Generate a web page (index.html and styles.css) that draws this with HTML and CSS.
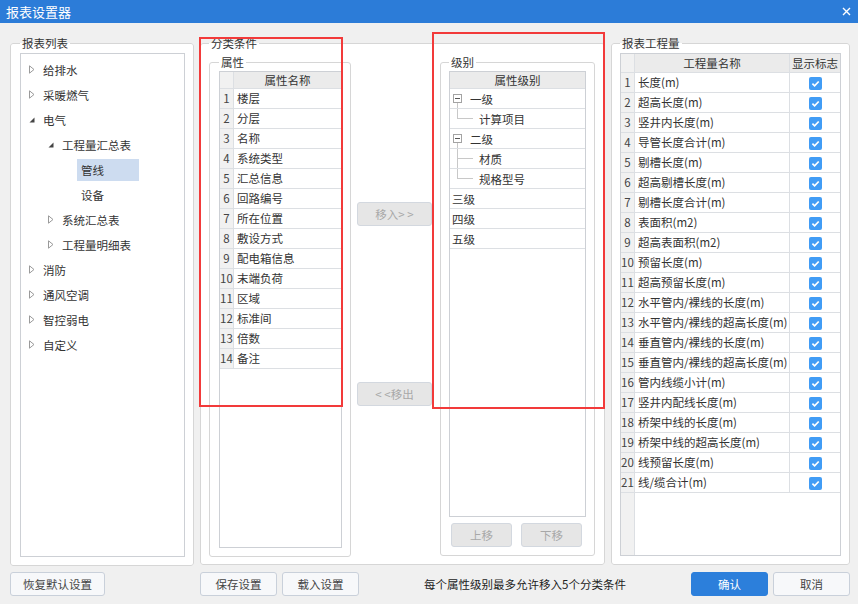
FILE: index.html
```html
<!DOCTYPE html>
<html lang="zh-CN">
<head>
    <meta charset="UTF-8">
    <title>报表设置器</title>
    <link rel="stylesheet" href="styles.css">
</head>
<body>

    <div class="titlebar">
        <span>报表设置器</span>
        <svg class="close" width="9" height="9" viewBox="0 0 9 9"><path d="M1 1L8 8M8 1L1 8" stroke="#fff" stroke-width="1.4"/></svg>
    </div>

    <div class="main">
        <fieldset class="group group-list">
            <legend>报表列表</legend>
            <ul class="tree">
                <li class="lv0"><span class="arrow"><svg width="6" height="9" viewBox="0 0 6 9"><path d="M0.5 0.8L5 4.5L0.5 8.2Z" fill="none" stroke="#9a9a9a"/></svg></span>给排水</li>
                <li class="lv0"><span class="arrow"><svg width="6" height="9" viewBox="0 0 6 9"><path d="M0.5 0.8L5 4.5L0.5 8.2Z" fill="none" stroke="#9a9a9a"/></svg></span>采暖燃气</li>
                <li class="lv0"><span class="arrow"><svg width="6" height="6" viewBox="0 0 6 6"><path d="M5.5 0.5V5.5H0.5Z" fill="#444"/></svg></span>电气</li>
                <li class="lv1"><span class="arrow"><svg width="6" height="6" viewBox="0 0 6 6"><path d="M5.5 0.5V5.5H0.5Z" fill="#444"/></svg></span>工程量汇总表</li>
                <li class="lv2"><span class="leaf selected">管线</span></li>
                <li class="lv2"><span class="leaf">设备</span></li>
                <li class="lv1"><span class="arrow"><svg width="6" height="9" viewBox="0 0 6 9"><path d="M0.5 0.8L5 4.5L0.5 8.2Z" fill="none" stroke="#9a9a9a"/></svg></span>系统汇总表</li>
                <li class="lv1"><span class="arrow"><svg width="6" height="9" viewBox="0 0 6 9"><path d="M0.5 0.8L5 4.5L0.5 8.2Z" fill="none" stroke="#9a9a9a"/></svg></span>工程量明细表</li>
                <li class="lv0"><span class="arrow"><svg width="6" height="9" viewBox="0 0 6 9"><path d="M0.5 0.8L5 4.5L0.5 8.2Z" fill="none" stroke="#9a9a9a"/></svg></span>消防</li>
                <li class="lv0"><span class="arrow"><svg width="6" height="9" viewBox="0 0 6 9"><path d="M0.5 0.8L5 4.5L0.5 8.2Z" fill="none" stroke="#9a9a9a"/></svg></span>通风空调</li>
                <li class="lv0"><span class="arrow"><svg width="6" height="9" viewBox="0 0 6 9"><path d="M0.5 0.8L5 4.5L0.5 8.2Z" fill="none" stroke="#9a9a9a"/></svg></span>智控弱电</li>
                <li class="lv0"><span class="arrow"><svg width="6" height="9" viewBox="0 0 6 9"><path d="M0.5 0.8L5 4.5L0.5 8.2Z" fill="none" stroke="#9a9a9a"/></svg></span>自定义</li>
            </ul>
        </fieldset>

        <fieldset class="group group-cond">
            <legend>分类条件</legend>
            <div class="cond-body">
                <fieldset class="sub sub-attr">
                    <legend>属性</legend>
                    <div class="grid attr-grid">
                        <table class="tbl">
                            <thead>
                                <tr><th class="no"></th><th class="name">属性名称</th></tr>
                            </thead>
                            <tbody>
                                <tr><td class="no">1</td><td>楼层</td></tr>
                                <tr><td class="no">2</td><td>分层</td></tr>
                                <tr><td class="no">3</td><td>名称</td></tr>
                                <tr><td class="no">4</td><td>系统类型</td></tr>
                                <tr><td class="no">5</td><td>汇总信息</td></tr>
                                <tr><td class="no">6</td><td>回路编号</td></tr>
                                <tr><td class="no">7</td><td>所在位置</td></tr>
                                <tr><td class="no">8</td><td>敷设方式</td></tr>
                                <tr><td class="no">9</td><td>配电箱信息</td></tr>
                                <tr><td class="no">10</td><td>末端负荷</td></tr>
                                <tr><td class="no">11</td><td>区域</td></tr>
                                <tr><td class="no">12</td><td>标准间</td></tr>
                                <tr><td class="no">13</td><td>倍数</td></tr>
                                <tr><td class="no">14</td><td>备注</td></tr>
                            </tbody>
                        </table>
                    </div>
                </fieldset>

                <div class="move-btns">
                    <button class="btn btn-off btn-in" disabled>移入&gt; &gt;</button>
                    <button class="btn btn-off btn-out" disabled>&lt; &lt;移出</button>
                </div>

                <fieldset class="sub sub-level">
                    <legend>级别</legend>
                    <div class="grid level-grid">
                        <div class="lv-head">属性级别</div>
                        <div class="lv-row"><span class="node"><span class="minus"></span></span><span class="lv-text">一级</span></div>
                        <div class="lv-row child last"><span class="guide"></span>计算项目</div>
                        <div class="lv-row"><span class="node"><span class="minus"></span></span><span class="lv-text">二级</span></div>
                        <div class="lv-row child"><span class="guide"></span>材质</div>
                        <div class="lv-row child last"><span class="guide"></span>规格型号</div>
                        <div class="lv-row plain">三级</div>
                        <div class="lv-row plain">四级</div>
                        <div class="lv-row plain">五级</div>
                    </div>
                    <div class="level-btns">
                        <button class="btn btn-off btn-small" disabled>上移</button>
                        <button class="btn btn-off btn-small" disabled>下移</button>
                    </div>
                </fieldset>
            </div>
        </fieldset>

        <fieldset class="group group-qty">
            <legend>报表工程量</legend>
            <div class="grid qty-grid">
                <table class="tbl">
                    <thead>
                        <tr><th class="no"></th><th class="qname">工程量名称</th><th class="flag">显示标志</th></tr>
                    </thead>
                    <tbody>
                        <tr><td class="no">1</td><td>长度(m)</td><td class="flag"><span class="check"></span></td></tr>
                        <tr><td class="no">2</td><td>超高长度(m)</td><td class="flag"><span class="check"></span></td></tr>
                        <tr><td class="no">3</td><td>竖井内长度(m)</td><td class="flag"><span class="check"></span></td></tr>
                        <tr><td class="no">4</td><td>导管长度合计(m)</td><td class="flag"><span class="check"></span></td></tr>
                        <tr><td class="no">5</td><td>剔槽长度(m)</td><td class="flag"><span class="check"></span></td></tr>
                        <tr><td class="no">6</td><td>超高剔槽长度(m)</td><td class="flag"><span class="check"></span></td></tr>
                        <tr><td class="no">7</td><td>剔槽长度合计(m)</td><td class="flag"><span class="check"></span></td></tr>
                        <tr><td class="no">8</td><td>表面积(m2)</td><td class="flag"><span class="check"></span></td></tr>
                        <tr><td class="no">9</td><td>超高表面积(m2)</td><td class="flag"><span class="check"></span></td></tr>
                        <tr><td class="no">10</td><td>预留长度(m)</td><td class="flag"><span class="check"></span></td></tr>
                        <tr><td class="no">11</td><td>超高预留长度(m)</td><td class="flag"><span class="check"></span></td></tr>
                        <tr><td class="no">12</td><td>水平管内/裸线的长度(m)</td><td class="flag"><span class="check"></span></td></tr>
                        <tr><td class="no">13</td><td>水平管内/裸线的超高长度(m)</td><td class="flag"><span class="check"></span></td></tr>
                        <tr><td class="no">14</td><td>垂直管内/裸线的长度(m)</td><td class="flag"><span class="check"></span></td></tr>
                        <tr><td class="no">15</td><td>垂直管内/裸线的超高长度(m)</td><td class="flag"><span class="check"></span></td></tr>
                        <tr><td class="no">16</td><td>管内线缆小计(m)</td><td class="flag"><span class="check"></span></td></tr>
                        <tr><td class="no">17</td><td>竖井内配线长度(m)</td><td class="flag"><span class="check"></span></td></tr>
                        <tr><td class="no">18</td><td>桥架中线的长度(m)</td><td class="flag"><span class="check"></span></td></tr>
                        <tr><td class="no">19</td><td>桥架中线的超高长度(m)</td><td class="flag"><span class="check"></span></td></tr>
                        <tr><td class="no">20</td><td>线预留长度(m)</td><td class="flag"><span class="check"></span></td></tr>
                        <tr><td class="no">21</td><td>线/缆合计(m)</td><td class="flag"><span class="check"></span></td></tr>
                    </tbody>
                </table>
            </div>
        </fieldset>
    </div>

    <div class="footer">
        <button class="btn btn-reset">恢复默认设置</button>
        <button class="btn btn-save">保存设置</button>
        <button class="btn">载入设置</button>
        <span class="tip">每个属性级别最多允许移入5个分类条件</span>
        <button class="btn btn-ok">确认</button>
        <button class="btn">取消</button>
    </div>

    <!-- annotation boxes drawn over the dialog -->
    <div class="mark mark-attr"></div>
    <div class="mark mark-level"></div>

</body>
</html>
```

FILE: styles.css
```css
* { box-sizing: border-box; }
html, body { margin: 0; }
body { position: relative; width: 858px; height: 604px; overflow: hidden; background: #f0f0f0; color: #333; font-family: "Noto Sans CJK SC", "Microsoft YaHei", sans-serif; font-size: 11.5px; }

.titlebar { height: 23px; display: flex; align-items: center; justify-content: space-between; padding: 0 7px 0 6px; background: #2c7cd8; color: #fff; font-size: 13px; }
.close { display: block; }

.main { display: flex; align-items: flex-start; gap: 6px; padding: 12px 0 0 10px; }
fieldset { margin: 0; min-width: 0; border: 1px solid #d6d6d6; border-radius: 3px; background: #fff; }
legend { padding: 0 2px; line-height: 16px; }

.group { padding: 0 8px 8px; }
.group-list { width: 184px; padding-left: 9px; }
.group-cond { width: 405px; padding-right: 9px; padding-bottom: 7px; }
.group-qty { width: 239px; }

/* report tree */
.tree { height: 504px; margin: 2px 0 0; padding: 3px 0 0; list-style: none; border: 1px solid #cdd0d5; }
.tree li { height: 25px; display: flex; align-items: center; }
.tree .lv0 { padding-left: 8px; }
.tree .lv1 { padding-left: 27px; }
.tree .lv2 { padding-left: 56px; }
.arrow { width: 14px; display: flex; align-items: center; }
.arrow svg { display: block; }
.leaf { width: 62px; height: 22px; line-height: 22px; padding-left: 4px; }
.leaf.selected { background: #cddcf0; }

/* classification */
.cond-body { display: flex; align-items: flex-start; margin-top: 3px; }
.sub { padding: 0 8px 8px; }
.sub-attr { width: 142px; padding-left: 9px; }
.sub-level { width: 155px; }
.move-btns { width: 75px; margin: 0 8px 0 6px; display: flex; flex-direction: column; }
.btn-in { margin-top: 148px; }
.btn-out { margin-top: 156px; }

.grid { border: 1px solid #cdd0d5; background: #fff; }
.attr-grid { height: 477px; margin-top: 1px; }
.level-grid { height: 446px; margin-top: 1px; }
.qty-grid { height: 503px; margin-top: 2px; background: linear-gradient(to right, #f1f1f1 13px, #dcdfe3 13px, #dcdfe3 14px, #fff 14px); }

.tbl { width: 100%; table-layout: fixed; border-collapse: separate; border-spacing: 0; }
.tbl th, .tbl td { padding: 0; border-right: 1px solid #dcdfe3; border-bottom: 1px solid #dcdfe3; white-space: nowrap; overflow: hidden; }
.tbl th:last-child, .tbl td:last-child { border-right: 0; }
.tbl th { height: 17px; line-height: 16px; font-weight: normal; text-align: center; background: #ebebeb; }
.tbl td { height: 20px; line-height: 19px; padding-left: 3px; background: #fff; }
.tbl .no { width: 14px; padding: 0; text-align: center; background: #f1f1f1; color: #444; }
.qty-grid .tbl th { height: 19px; line-height: 18px; }
.tbl .qname { width: 155px; }
.tbl .flag { width: 50px; padding: 0; text-align: center; }
.check { display: inline-block; width: 13px; height: 13px; vertical-align: middle; border-radius: 2px; background: #419cf5 url("data:image/svg+xml,%3Csvg xmlns='http://www.w3.org/2000/svg' width='13' height='13'%3E%3Cpath d='M3.4 6.7L5.6 8.9L9.7 4.5' fill='none' stroke='white' stroke-width='1.7'/%3E%3C/svg%3E") no-repeat; }

/* level tree */
.lv-head { height: 17px; line-height: 16px; text-align: center; background: #ebebeb; border-bottom: 1px solid #dcdfe3; }
.lv-row { height: 20px; display: flex; align-items: center; border-bottom: 1px solid #dcdfe3; }
.lv-row.plain { padding-left: 2px; }
.node { width: 9px; height: 19px; margin-left: 3px; display: flex; align-items: center; background: linear-gradient(#c8c8c8, #c8c8c8) center bottom / 1px 50% no-repeat; }
.minus { width: 9px; height: 9px; border: 1px solid #a3a3a3; background: #fff linear-gradient(#555, #555) center / 5px 1px no-repeat; }
.lv-text { margin-left: 8px; }
.child .guide { width: 16px; height: 19px; margin: 0 6px 0 7px; background: linear-gradient(#c8c8c8, #c8c8c8) left top / 1px 100% no-repeat, linear-gradient(#c8c8c8, #c8c8c8) left center / 100% 1px no-repeat; }
.child.last .guide { background: linear-gradient(#c8c8c8, #c8c8c8) left top / 1px 50% no-repeat, linear-gradient(#c8c8c8, #c8c8c8) left center / 100% 1px no-repeat; }
.level-btns { display: flex; gap: 9px; margin: 6px 0 0 2px; }

/* buttons */
.btn { height: 24px; width: 77px; padding: 0; border: 1px solid #c9d0da; border-radius: 3px; background: #f7f8fa; color: #444; font: inherit; }
.btn-off { width: 75px; background: #e6e6e6; border-color: #d3d8df; color: #a8a8a8; }
.btn-small { width: 61px; }
.btn-reset { width: 95px; }
.btn-save { margin-left: 90px; }
.btn-ok { background: #2c7fdb; border-color: #2c7fdb; color: #fff; }

.footer { display: flex; align-items: center; gap: 5px; margin-top: 6px; padding: 0 8px 0 10px; }
.tip { margin-left: 60px; flex: 1; color: #222; }

.mark { position: absolute; border: 2px solid #f23a3a; }
.mark-attr { left: 199px; top: 37px; width: 144px; height: 370px; }
.mark-level { left: 432px; top: 32px; width: 173px; height: 377px; }
```
